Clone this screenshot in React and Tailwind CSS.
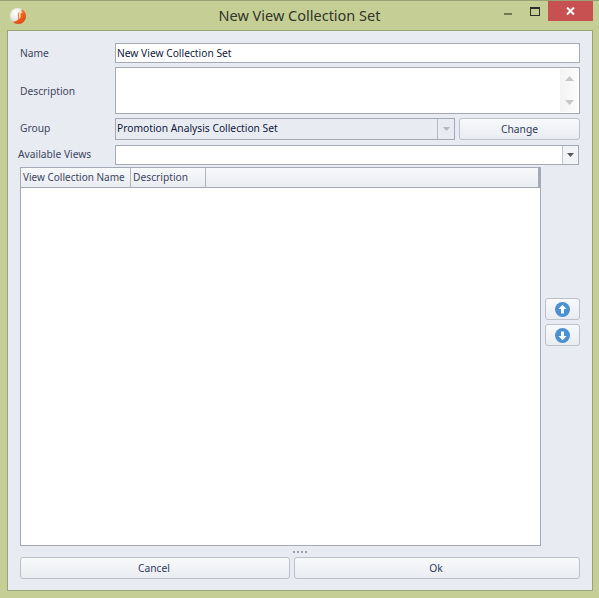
import React from "react";

const font = { fontFamily: '"Noto Sans", sans-serif' };

function Logo() {
  return (
    <svg width="18" height="18" viewBox="0 0 18 18" className="block">
      <defs>
        <radialGradient id="silver" cx="0.35" cy="0.3" r="0.8">
          <stop offset="0" stopColor="#ffffff" />
          <stop offset="0.6" stopColor="#e3e3e0" />
          <stop offset="1" stopColor="#9a9a90" />
        </radialGradient>
        <linearGradient id="orange" x1="0" y1="0" x2="0.6" y2="1">
          <stop offset="0" stopColor="#f8a040" />
          <stop offset="0.6" stopColor="#f0641c" />
          <stop offset="1" stopColor="#e04a10" />
        </linearGradient>
      </defs>
      <circle cx="9" cy="9" r="8" fill="url(#silver)" />
      <path d="M12.5 2 C15.5 3.4 17 6 17 9 C17 13.5 13.5 17 9 17 C6.5 17 4.8 16 3.6 14.6 C5.5 14.8 8 14 9 12.5 C10.2 10.6 8.6 9.2 8.8 7 C9 5 10.6 4.6 12.5 4.4 Z" fill="url(#orange)" />
      <path d="M12.8 4.6 C10.8 4.8 9.6 5.6 9.8 7.4 C10 9.2 11 10.4 10.2 12.4 C11.6 11 12 9 11.4 7.4 C11.2 6.4 11.8 5.6 13.4 5.4 Z" fill="#fff4e4" />
    </svg>
  );
}

function Caret({ color = "#44474f", w = 9, h = 5 }) {
  return (
    <svg width={w} height={h} viewBox="0 0 9 5" className="block">
      <path d="M0 0 H9 L4.5 5 Z" fill={color} />
    </svg>
  );
}

function Btn({ children, className = "" }) {
  return (
    <div className={`flex items-center justify-center rounded-[3px] border border-[#bcc0c8] bg-gradient-to-b from-[#f8f9fb] to-[#e9ecf1] text-[10.25px] text-[#2f3a5c] ${className}`}>
      {children}
    </div>
  );
}

function RoundArrow({ up }) {
  return (
    <svg width="15" height="15" viewBox="0 0 15 15" className="block">
      <circle cx="7.5" cy="7.5" r="7.5" fill="#4a90d2" />
      <g transform={up ? "" : "rotate(180 7.5 7.5)"}>
        <path d="M7.5 2.8 L11.6 7 L9 7 L9 11.6 L6 11.6 L6 7 L3.4 7 Z" fill="#ffffff" />
      </g>
    </svg>
  );
}

function Label({ children, className = "" }) {
  return <div className={`shrink-0 text-[10.25px] text-[#3d4660] ${className}`}>{children}</div>;
}

export default function App() {
  return (
    <div style={font} className="flex h-[598px] w-[599px] flex-col border-t border-[#99a276] bg-[#c5cf95]">
      <div className="flex h-[29px] shrink-0 items-start">
        <div className="w-[95px] shrink-0 pl-[9px] pt-[6px]">
          <Logo />
        </div>
        <div className="flex-1 whitespace-nowrap pt-[4px] text-center text-[14.5px] leading-[20px] text-[#32352a]">New View Collection Set</div>
        <div className="flex w-[95px] shrink-0 items-start">
          <div className="mt-[12px] h-[2px] w-[8px] shrink-0 bg-[#717a58]" />
          <div className="ml-[18px] mt-[6px] h-[9px] w-[10px] shrink-0 border border-t-2 border-[#2c2f2a]" />
          <div className="ml-[8px] flex h-[20px] w-[45px] shrink-0 items-center justify-center bg-[#c75050]">
            <svg width="9" height="8" viewBox="0 0 9 8" className="block">
              <path d="M1 0.5 L8 7.5 M8 0.5 L1 7.5" stroke="#ffffff" strokeWidth="2" />
            </svg>
          </div>
        </div>
      </div>

      <div className="mb-[7px] ml-[7px] mr-[6px] flex flex-1 flex-col border border-[#9aa37a] bg-[#e8ebf1] px-[12px] pb-[11px] pt-[12px]">
        <div className="flex h-[20px] items-center">
          <Label className="w-[95px] pt-[2px]">Name</Label>
          <div className="flex h-full flex-1 items-center border border-[#a4a9b5] bg-white pl-[1px] pt-[2px] text-[10.25px] text-[#101a3c]">New View Collection Set</div>
        </div>

        <div className="mt-[4px] flex h-[47px] items-center">
          <Label className="w-[95px] pt-[2px]">Description</Label>
          <div className="flex h-full flex-1 justify-end border border-[#a4a9b5] bg-white">
            <div className="my-[1px] mr-[1px] flex w-[18px] flex-col items-center justify-between bg-gradient-to-r from-[#f3f3f3] to-[#fcfcfc] py-[7px]">
              <svg width="9" height="5" viewBox="0 0 9 5" className="block"><path d="M0 5 H9 L4.5 0 Z" fill="#c6c7c9" /></svg>
              <Caret color="#c6c7c9" />
            </div>
          </div>
        </div>

        <div className="mt-[4px] flex h-[22px] items-stretch">
          <Label className="w-[95px] self-center">Group</Label>
          <div className="flex w-[340px] items-center border border-[#a4a9b5] bg-[#e8ebf1] text-[10.25px] text-[#101a3c]">
            <div className="flex-1 pl-[1px]">Promotion Analysis Collection Set</div>
            <div className="flex h-full w-[17px] items-center justify-center border-l border-[#b6bac3]">
              <Caret color="#b5b8bf" w={7} h={4} />
            </div>
          </div>
          <Btn className="ml-[4px] flex-1 pt-[2px]">Change</Btn>
        </div>

        <div className="mt-[5px] flex h-[20px] items-center pr-[1px]">
          <Label className="-ml-[2px] w-[97px]">Available Views</Label>
          <div className="flex h-full flex-1 items-center justify-end border border-[#a4a9b5] bg-white">
            <div className="flex h-full w-[16px] items-center justify-center border-l border-[#c3c6cd] bg-[#f1f3f6]">
              <Caret color="#55585f" w={7} h={4} />
            </div>
          </div>
        </div>

        <div className="mt-[2px] flex flex-1 items-stretch">
          <div className="flex w-[521px] flex-col border border-[#a4a9b5] bg-white">
            <div className="flex h-[20px] items-stretch whitespace-nowrap border-b border-r-2 border-[#a4a9b5] bg-gradient-to-b from-[#f8f9fb] to-[#e9ecf1] text-[10.25px] text-[#3d4660]">
              <div className="flex w-[110px] items-center border-r border-[#b0b4be] pl-[2px] text-[10px]">View Collection Name</div>
              <div className="flex w-[75px] items-center border-r border-[#b0b4be] pl-[2px]">Description</div>
              <div className="flex-1" />
            </div>
            <div className="flex-1" />
          </div>
          <div className="flex flex-1 flex-col items-end gap-[4px] pt-[131px]">
            <Btn className="h-[22px] w-[35px]"><RoundArrow up /></Btn>
            <Btn className="h-[22px] w-[35px]"><RoundArrow /></Btn>
          </div>
        </div>

        <div className="flex h-[11px] items-center justify-center gap-[2px] pr-[1px]">
          <div className="h-[2px] w-[2px] bg-[#9ea2ac]" />
          <div className="h-[2px] w-[2px] bg-[#9ea2ac]" />
          <div className="h-[2px] w-[2px] bg-[#9ea2ac]" />
          <div className="h-[2px] w-[2px] bg-[#9ea2ac]" />
        </div>

        <div className="flex h-[22px] gap-[4px]">
          <Btn className="w-[270px] pr-[2px] pt-[2px]">Cancel</Btn>
          <Btn className="flex-1 pr-[2px] pt-[2px]">Ok</Btn>
        </div>
      </div>
    </div>
  );
}
